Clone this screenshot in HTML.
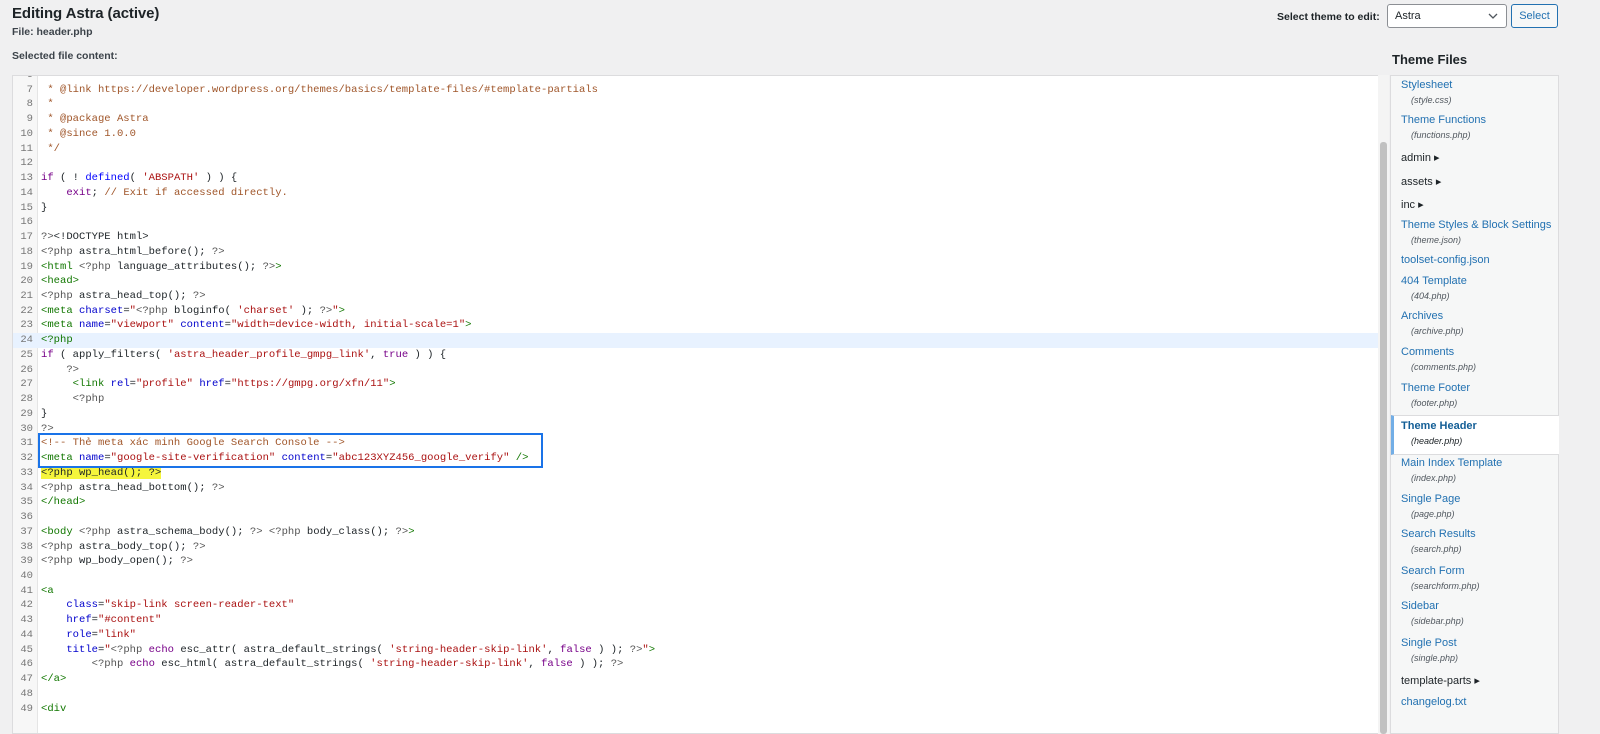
<!DOCTYPE html>
<html><head><meta charset="utf-8">
<style>
*{margin:0;padding:0;box-sizing:border-box}
body{width:1600px;height:734px;background:#f0f0f1;font-family:"Liberation Sans",sans-serif;color:#1d2327;position:relative;overflow:hidden}
.abs{position:absolute}
h1{position:absolute;left:12px;top:5px;font-size:15px;font-weight:600;letter-spacing:-0.1px}
.file{left:12px;top:26px;font-size:10.5px;font-weight:600;color:#3c434a}
.sel{left:12px;top:50px;font-size:10.5px;font-weight:600;color:#3c434a}
.editor{left:12px;top:75px;width:1377px;height:659px;background:#fff;border:1px solid #dcdcde;overflow:hidden}
.gutter{position:absolute;left:0;top:0;width:25px;height:100%;background:#f7f7f7;border-right:1px solid #e5e5e5}
.code{position:absolute;left:0;top:-8px;font-family:"Liberation Mono",monospace;font-size:10.55px;line-height:14.74px;white-space:normal;width:1366px}
.ln{display:block;height:14.74px;position:relative}
.ln .n{position:absolute;left:0;width:20px;text-align:right;color:#777}
.ln .t{position:absolute;left:28px;white-space:pre}
.act{background:#e8f2ff}
.c{color:#a0562a}.k{color:#708}.s{color:#a11}.g{color:#170}.a{color:#00c}.m{color:#555}.d{color:#00f}
.hl{background:#f5f53c}
.scroll{left:1378px;top:75px;width:11px;height:659px;background:#f4f4f4}
.thumb{left:1380px;top:142px;width:7px;height:592px;background:#c1c1c1;border-radius:3px}
.box{left:38px;top:433px;width:505px;height:35px;border:2px solid #1a73e8}
.side{left:1390px;top:75px;width:169px;height:659px;background:#f6f7f7;border:1px solid #dcdcde}
.tf{left:1392px;top:52px;font-size:13px;font-weight:600}
.it{position:absolute;left:1401px;font-size:11px;color:#2271b1;white-space:nowrap}
.fn{position:absolute;left:1411px;font-size:9px;font-style:italic;color:#50575e;white-space:nowrap}
.dir{color:#1d2327}
.cur{left:1391px;top:415px;width:168px;height:40px;background:#fff;border-left:3px solid #72aee6;border-top:1px solid #dcdcde;border-bottom:1px solid #dcdcde}
.selt{left:1277px;top:11px;font-size:10.5px;font-weight:600;color:#1d2327}
.dd{left:1387px;top:4px;width:120px;height:24px;background:#fff;border:1px solid #8c8f94;border-radius:3px;font-size:11px;padding:5px 7px}
.btn{left:1511px;top:4px;width:47px;height:24px;border:1px solid #2271b1;border-radius:3px;color:#2271b1;font-size:11px;text-align:center;line-height:22px;background:#f6f7f7}
</style></head><body>
<h1>Editing Astra (active)</h1>
<div class="abs file">File: header.php</div>
<div class="abs sel">Selected file content:</div>
<div class="abs selt">Select theme to edit:</div>
<div class="abs dd">Astra<svg style="position:absolute;right:8px;top:8px" width="10" height="6" viewBox="0 0 10 6"><path d="M1 1l4 4 4-4" stroke="#50575e" stroke-width="1.3" fill="none"/></svg></div>
<div class="abs btn">Select</div>

<div class="abs editor">
<div class="gutter"></div>
<div class="code"><span class="ln"><span class="n">6</span><span class="t c"> *</span></span><span class="ln"><span class="n">7</span><span class="t c"> * @link https://developer.wordpress.org/themes/basics/template-files/#template-partials</span></span><span class="ln"><span class="n">8</span><span class="t c"> *</span></span><span class="ln"><span class="n">9</span><span class="t c"> * @package Astra</span></span><span class="ln"><span class="n">10</span><span class="t c"> * @since 1.0.0</span></span><span class="ln"><span class="n">11</span><span class="t c"> */</span></span><span class="ln"><span class="n">12</span><span class="t"></span></span><span class="ln"><span class="n">13</span><span class="t"><span class="k">if</span> ( ! <span class="d">defined</span>( <span class="s">'ABSPATH'</span> ) ) {</span></span><span class="ln"><span class="n">14</span><span class="t">    <span class="k">exit</span>; <span class="c">// Exit if accessed directly.</span></span></span><span class="ln"><span class="n">15</span><span class="t">}</span></span><span class="ln"><span class="n">16</span><span class="t"></span></span><span class="ln"><span class="n">17</span><span class="t"><span class="m">?&gt;</span>&lt;!DOCTYPE html&gt;</span></span><span class="ln"><span class="n">18</span><span class="t"><span class="m">&lt;?php</span> astra_html_before(); <span class="m">?&gt;</span></span></span><span class="ln"><span class="n">19</span><span class="t"><span class="g">&lt;html</span> <span class="m">&lt;?php</span> language_attributes(); <span class="m">?&gt;</span><span class="g">&gt;</span></span></span><span class="ln"><span class="n">20</span><span class="t g">&lt;head&gt;</span></span><span class="ln"><span class="n">21</span><span class="t"><span class="m">&lt;?php</span> astra_head_top(); <span class="m">?&gt;</span></span></span><span class="ln"><span class="n">22</span><span class="t"><span class="g">&lt;meta</span> <span class="a">charset</span>=<span class="s">"</span><span class="m">&lt;?php</span> bloginfo( <span class="s">'charset'</span> ); <span class="m">?&gt;</span><span class="s">"</span><span class="g">&gt;</span></span></span><span class="ln"><span class="n">23</span><span class="t"><span class="g">&lt;meta</span> <span class="a">name</span>=<span class="s">"viewport"</span> <span class="a">content</span>=<span class="s">"width=device-width, initial-scale=1"</span><span class="g">&gt;</span></span></span><span class="ln act"><span class="n">24</span><span class="t g">&lt;?php</span></span><span class="ln"><span class="n">25</span><span class="t"><span class="k">if</span> ( apply_filters( <span class="s">'astra_header_profile_gmpg_link'</span>, <span class="k">true</span> ) ) {</span></span><span class="ln"><span class="n">26</span><span class="t">    <span class="m">?&gt;</span></span></span><span class="ln"><span class="n">27</span><span class="t">     <span class="g">&lt;link</span> <span class="a">rel</span>=<span class="s">"profile"</span> <span class="a">href</span>=<span class="s">"https://gmpg.org/xfn/11"</span><span class="g">&gt;</span></span></span><span class="ln"><span class="n">28</span><span class="t">     <span class="m">&lt;?php</span></span></span><span class="ln"><span class="n">29</span><span class="t">}</span></span><span class="ln"><span class="n">30</span><span class="t m">?&gt;</span></span><span class="ln"><span class="n">31</span><span class="t c">&lt;!-- Thẻ meta xác minh Google Search Console --&gt;</span></span><span class="ln"><span class="n">32</span><span class="t"><span class="g">&lt;meta</span> <span class="a">name</span>=<span class="s">"google-site-verification"</span> <span class="a">content</span>=<span class="s">"abc123XYZ456_google_verify"</span> <span class="g">/&gt;</span></span></span><span class="ln"><span class="n">33</span><span class="t"><span class="hl">&lt;?php wp_head(); ?&gt;</span></span></span><span class="ln"><span class="n">34</span><span class="t"><span class="m">&lt;?php</span> astra_head_bottom(); <span class="m">?&gt;</span></span></span><span class="ln"><span class="n">35</span><span class="t g">&lt;/head&gt;</span></span><span class="ln"><span class="n">36</span><span class="t"></span></span><span class="ln"><span class="n">37</span><span class="t"><span class="g">&lt;body</span> <span class="m">&lt;?php</span> astra_schema_body(); <span class="m">?&gt;</span> <span class="m">&lt;?php</span> body_class(); <span class="m">?&gt;</span><span class="g">&gt;</span></span></span><span class="ln"><span class="n">38</span><span class="t"><span class="m">&lt;?php</span> astra_body_top(); <span class="m">?&gt;</span></span></span><span class="ln"><span class="n">39</span><span class="t"><span class="m">&lt;?php</span> wp_body_open(); <span class="m">?&gt;</span></span></span><span class="ln"><span class="n">40</span><span class="t"></span></span><span class="ln"><span class="n">41</span><span class="t g">&lt;a</span></span><span class="ln"><span class="n">42</span><span class="t">    <span class="a">class</span>=<span class="s">"skip-link screen-reader-text"</span></span></span><span class="ln"><span class="n">43</span><span class="t">    <span class="a">href</span>=<span class="s">"#content"</span></span></span><span class="ln"><span class="n">44</span><span class="t">    <span class="a">role</span>=<span class="s">"link"</span></span></span><span class="ln"><span class="n">45</span><span class="t">    <span class="a">title</span>=<span class="s">"</span><span class="m">&lt;?php</span> <span class="k">echo</span> esc_attr( astra_default_strings( <span class="s">'string-header-skip-link'</span>, <span class="k">false</span> ) ); <span class="m">?&gt;</span><span class="s">"</span><span class="g">&gt;</span></span></span><span class="ln"><span class="n">46</span><span class="t">        <span class="m">&lt;?php</span> <span class="k">echo</span> esc_html( astra_default_strings( <span class="s">'string-header-skip-link'</span>, <span class="k">false</span> ) ); <span class="m">?&gt;</span></span></span><span class="ln"><span class="n">47</span><span class="t g">&lt;/a&gt;</span></span><span class="ln"><span class="n">48</span><span class="t"></span></span><span class="ln"><span class="n">49</span><span class="t g">&lt;div</span></span></div>
</div>
<div class="abs box"></div>
<div class="abs scroll"></div>
<div class="abs thumb"></div>

<div class="abs tf">Theme Files</div>
<div class="abs side"></div>
<div class="abs cur"></div>
<div class="it" style="top:79px">Stylesheet</div><div class="fn" style="top:95px">(style.css)</div>
<div class="it" style="top:114px">Theme Functions</div><div class="fn" style="top:130px">(functions.php)</div>
<div class="it dir" style="top:151px">admin ▸</div>
<div class="it dir" style="top:175px">assets ▸</div>
<div class="it dir" style="top:198px">inc ▸</div>
<div class="it" style="top:219px">Theme Styles &amp; Block Settings</div><div class="fn" style="top:235px">(theme.json)</div>
<div class="it" style="top:254px">toolset-config.json</div>
<div class="it" style="top:275px">404 Template</div><div class="fn" style="top:291px">(404.php)</div>
<div class="it" style="top:310px">Archives</div><div class="fn" style="top:326px">(archive.php)</div>
<div class="it" style="top:346px">Comments</div><div class="fn" style="top:362px">(comments.php)</div>
<div class="it" style="top:382px">Theme Footer</div><div class="fn" style="top:398px">(footer.php)</div>
<div class="it" style="top:420px;font-weight:600;color:#135e96">Theme Header</div><div class="fn" style="top:436px;color:#1d2327">(header.php)</div>
<div class="it" style="top:457px">Main Index Template</div><div class="fn" style="top:473px">(index.php)</div>
<div class="it" style="top:493px">Single Page</div><div class="fn" style="top:509px">(page.php)</div>
<div class="it" style="top:528px">Search Results</div><div class="fn" style="top:544px">(search.php)</div>
<div class="it" style="top:565px">Search Form</div><div class="fn" style="top:581px">(searchform.php)</div>
<div class="it" style="top:600px">Sidebar</div><div class="fn" style="top:616px">(sidebar.php)</div>
<div class="it" style="top:637px">Single Post</div><div class="fn" style="top:653px">(single.php)</div>
<div class="it dir" style="top:674px">template-parts ▸</div>
<div class="it" style="top:696px">changelog.txt</div>
</body></html>
